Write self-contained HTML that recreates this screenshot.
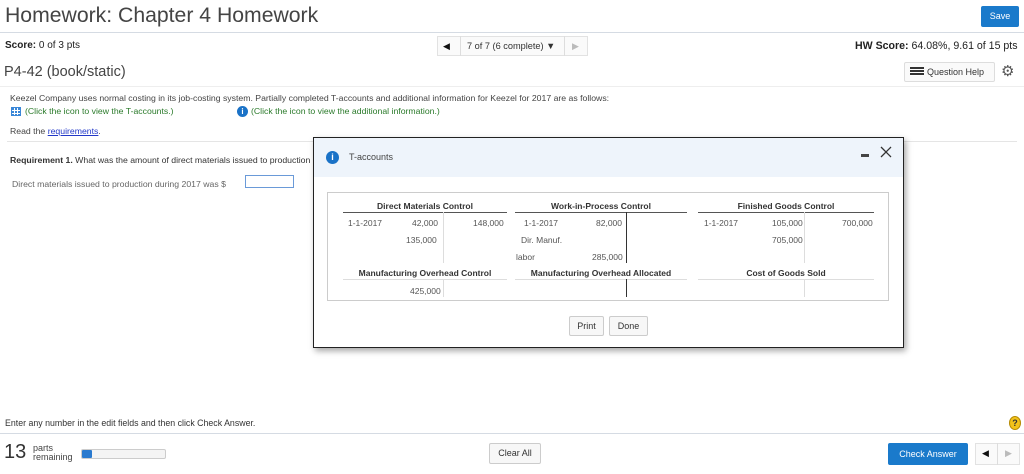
<!DOCTYPE html>
<html><head><style>
*{margin:0;padding:0;box-sizing:border-box}
body{width:1024px;height:474px;position:relative;font-family:"Liberation Sans",sans-serif;color:#333;background:#fff;overflow:hidden}
.a{position:absolute;white-space:nowrap}
.s{font-size:8.7px;color:#444}
.g{color:#2a7a2a}
.hl{position:absolute;height:1px;background:#dde3ea}
.btn{position:absolute;border:1px solid #ccc;border-radius:2px;background:#f7f7f7;font-size:9px;color:#333;text-align:center}
.th{position:absolute;font-size:8.5px;font-weight:bold;color:#333;text-align:center}
.tl{position:absolute;height:1px;background:#555}
.tl2{position:absolute;height:1px;background:#ddd}
.vl{position:absolute;width:1px;background:#333}
.vl2{position:absolute;width:1px;background:#ddd}
.n{position:absolute;font-size:8.5px;color:#555;white-space:nowrap}
</style></head><body>
<div class="a" style="left:5px;top:4px;font-size:21.2px;color:#444">Homework: Chapter 4 Homework</div>
<div class="a" style="left:981px;top:6px;width:38px;height:21px;background:#1a7acb;border-radius:2px;color:#fff;font-size:9px;text-align:center;line-height:21px">Save</div>
<div class="hl" style="left:0;top:32px;width:1024px;background:#d5dbe3"></div>
<div class="a" style="left:5px;top:40px;font-size:10px;color:#222"><b>Score:</b> 0 of 3 pts</div>
<div class="a" style="left:437px;top:36px;width:151px;height:20px;border:1px solid #e2e2e2;background:#fafafa"></div>
<div class="a" style="left:443px;top:41px;font-size:9px;color:#111">◀</div>
<div class="a" style="left:460px;top:36px;width:1px;height:20px;background:#ddd"></div>
<div class="a" style="left:467px;top:41px;font-size:9.2px;color:#333">7 of 7 (6 complete) ▼</div>
<div class="a" style="left:564px;top:36px;width:1px;height:20px;background:#ddd"></div>
<div class="a" style="left:572px;top:41px;font-size:9px;color:#bbb">▶</div>
<div class="a" style="left:855px;top:40px;font-size:10.6px;color:#222"><b>HW Score:</b> 64.08%, 9.61 of 15 pts</div>
<div class="a" style="left:4px;top:64px;font-size:14.5px;color:#444">P4-42 (book/static)</div>
<div class="a" style="left:904px;top:62px;width:91px;height:20px;border:1px solid #ddd;border-radius:2px;background:#fafafa;font-size:9px;line-height:18px;padding-left:22px;color:#333">Question Help</div>
<div class="a" style="left:910px;top:67px;width:14px;height:9px;background:repeating-linear-gradient(#333 0 2px,#fff 2px 3px)"></div>
<div class="a" style="left:1001px;top:62px;font-size:15px;color:#555">⚙</div>
<div class="hl" style="left:0;top:86px;width:1024px;background:#eee"></div>
<div class="a s" style="left:10px;top:93px">Keezel Company uses normal costing in its job-costing system. Partially completed T-accounts and additional information for Keezel for 2017 are as follows:</div>
<div class="a" style="left:11px;top:107px;width:10px;height:9px;background:#3a87d8;border:1px solid #3a87d8;background-image:linear-gradient(90deg,transparent 2px,#fff 2px 3px,transparent 3px 5px,#fff 5px 6px,transparent 6px),linear-gradient(transparent 2px,#fff 2px 3px,transparent 3px 5px,#fff 5px 6px,transparent 6px)"></div>
<div class="a s g" style="left:25px;top:106px">(Click the icon to view the T-accounts.)</div>
<div class="a" style="left:237px;top:106px;width:11px;height:11px;border-radius:50%;background:#1a72c7;color:#fff;font-size:8px;font-weight:bold;text-align:center;line-height:11px">i</div>
<div class="a s g" style="left:251px;top:106px">(Click the icon to view the additional information.)</div>
<div class="a s" style="left:10px;top:126px">Read the <span style="color:#2238c8;text-decoration:underline">requirements</span>.</div>
<div class="hl" style="left:7px;top:141px;width:1010px;background:#e5e5e5"></div>
<div class="a s" style="left:10px;top:155px;color:#333"><b>Requirement 1.</b> What was the amount of direct materials issued to production</div>
<div class="a s" style="left:12px;top:179px;color:#666">Direct materials issued to production during 2017 was $</div>
<div class="a" style="left:245px;top:175px;width:49px;height:13px;border:1px solid #6a9ad8"></div>

<div class="a" style="left:313px;top:137px;width:591px;height:211px;border:1px solid #222;background:#fff;box-shadow:2px 3px 6px rgba(0,0,0,.35)"></div>
<div class="a" style="left:314px;top:138px;width:589px;height:39px;background:#eef4fb"></div>
<div class="a" style="left:326px;top:151px;width:13px;height:13px;border-radius:50%;background:#1a72c7;color:#fff;font-size:9px;font-weight:bold;text-align:center;line-height:13px">i</div>
<div class="a" style="left:349px;top:152px;font-size:9px;color:#444">T-accounts</div>
<div class="a" style="left:861px;top:154px;width:8px;height:3px;background:#444"></div>
<svg class="a" style="left:880px;top:146px" width="12" height="12" viewBox="0 0 12 12"><path d="M1 1L11 11M11 1L1 11" stroke="#333" stroke-width="1.3"/></svg>
<div class="a" style="left:327px;top:192px;width:562px;height:109px;border:1px solid #ccc"></div>

<div class="th" style="left:343px;top:201px;width:164px">Direct Materials Control</div>
<div class="th" style="left:515px;top:201px;width:172px">Work-in-Process Control</div>
<div class="th" style="left:698px;top:201px;width:176px">Finished Goods Control</div>
<div class="tl" style="left:343px;top:212px;width:164px"></div>
<div class="tl" style="left:515px;top:212px;width:172px"></div>
<div class="tl" style="left:698px;top:212px;width:176px"></div>
<div class="vl2" style="left:443px;top:212px;height:51px"></div>
<div class="vl" style="left:626px;top:212px;height:51px"></div>
<div class="vl2" style="left:804px;top:212px;height:51px"></div>
<div class="n" style="left:348px;top:218px">1-1-2017</div>
<div class="n" style="left:412px;top:218px">42,000</div>
<div class="n" style="left:473px;top:218px">148,000</div>
<div class="n" style="left:406px;top:235px">135,000</div>
<div class="n" style="left:524px;top:218px">1-1-2017</div>
<div class="n" style="left:596px;top:218px">82,000</div>
<div class="n" style="left:521px;top:235px">Dir. Manuf.</div>
<div class="n" style="left:516px;top:252px">labor</div>
<div class="n" style="left:592px;top:252px">285,000</div>
<div class="n" style="left:704px;top:218px">1-1-2017</div>
<div class="n" style="left:772px;top:218px">105,000</div>
<div class="n" style="left:842px;top:218px">700,000</div>
<div class="n" style="left:772px;top:235px">705,000</div>
<div class="th" style="left:343px;top:268px;width:164px">Manufacturing Overhead Control</div>
<div class="th" style="left:515px;top:268px;width:172px">Manufacturing Overhead Allocated</div>
<div class="th" style="left:698px;top:268px;width:176px">Cost of Goods Sold</div>
<div class="tl2" style="left:343px;top:279px;width:164px"></div>
<div class="tl2" style="left:515px;top:279px;width:172px"></div>
<div class="tl2" style="left:698px;top:279px;width:176px"></div>
<div class="vl2" style="left:443px;top:279px;height:18px"></div>
<div class="vl" style="left:626px;top:279px;height:18px"></div>
<div class="vl2" style="left:804px;top:279px;height:18px"></div>
<div class="n" style="left:410px;top:286px">425,000</div>
<div class="btn" style="left:569px;top:316px;width:35px;height:20px;line-height:18px">Print</div>
<div class="btn" style="left:609px;top:316px;width:39px;height:20px;line-height:18px">Done</div>

<div class="a" style="left:5px;top:418px;font-size:8.8px;color:#333">Enter any number in the edit fields and then click Check Answer.</div>
<div class="a" style="left:1009px;top:416px;width:12px;height:14px;border-radius:50%;background:#f2c21b;border:1px solid #b58a00;font-size:9px;font-weight:bold;text-align:center;line-height:12px;color:#333">?</div>
<div class="hl" style="left:0;top:433px;width:1024px;background:#d5dbe3"></div>
<div class="a" style="left:4px;top:441px;font-size:20px;color:#333">13</div>
<div class="a" style="left:33px;top:444px;font-size:9px;line-height:9px;color:#444">parts<br>remaining</div>
<div class="a" style="left:81px;top:449px;width:85px;height:10px;border:1px solid #ccc;border-radius:2px;background:#f4f4f4"></div>
<div class="a" style="left:82px;top:450px;width:10px;height:8px;background:#2a7acf;border-radius:1px"></div>
<div class="btn" style="left:489px;top:443px;width:52px;height:21px;line-height:19px">Clear All</div>
<div class="a" style="left:888px;top:443px;width:80px;height:22px;background:#1a7acb;border-radius:2px;color:#fff;font-size:9px;text-align:center;line-height:22px">Check Answer</div>
<div class="a" style="left:975px;top:443px;width:45px;height:22px;border:1px solid #e2e2e2;background:#fafafa"></div>
<div class="a" style="left:982px;top:448px;font-size:9px;color:#111">◀</div>
<div class="a" style="left:997px;top:443px;width:1px;height:22px;background:#ddd"></div>
<div class="a" style="left:1005px;top:448px;font-size:9px;color:#bbb">▶</div>
</body></html>
